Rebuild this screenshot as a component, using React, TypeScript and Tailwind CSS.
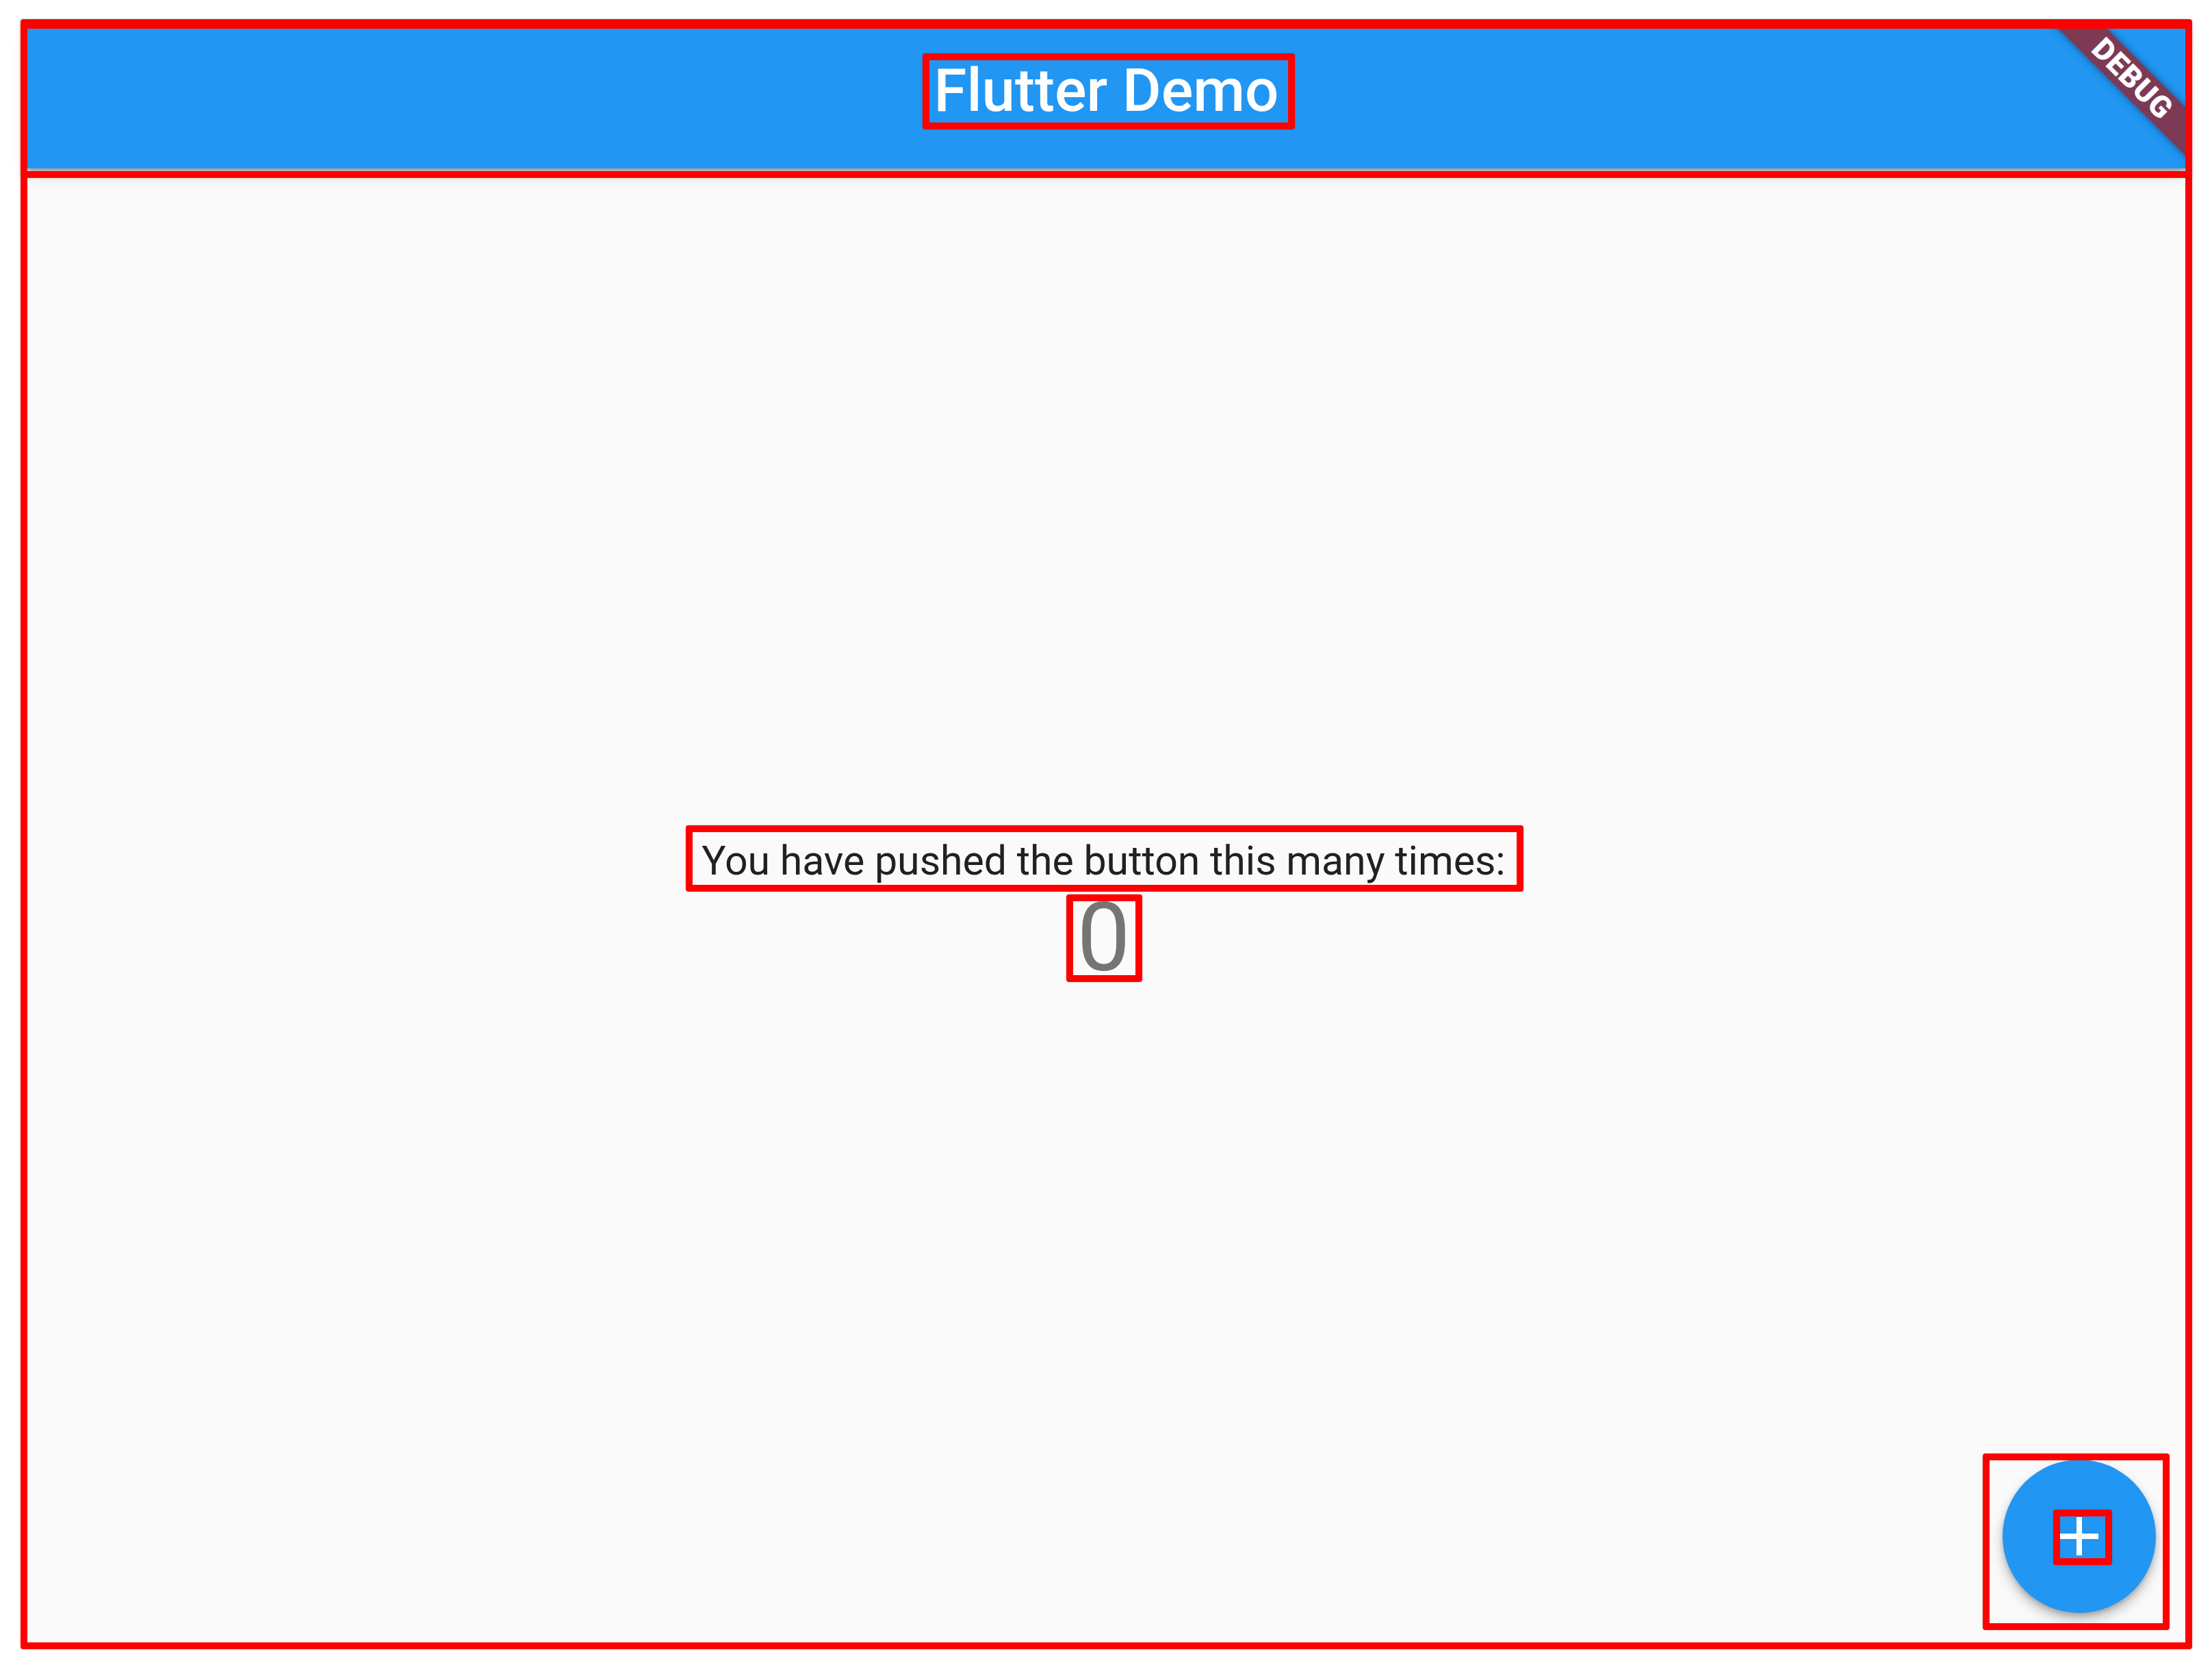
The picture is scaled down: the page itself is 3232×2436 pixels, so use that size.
import React from "react";

// red annotation rectangles drawn over the screenshot
const marks = [
  { left: 30, top: 28, width: 3173, height: 2382 },
  { left: 30, top: 32, width: 3173, height: 228 },
  { left: 1348, top: 78, width: 544, height: 111 },
  { left: 1002, top: 1206, width: 1224, height: 97 },
  { left: 1558, top: 1307, width: 111, height: 128 },
  { left: 2897, top: 2124, width: 273, height: 258 },
  { left: 3000, top: 2206, width: 86, height: 81 },
];

function DebugBanner() {
  return (
    <div className="pointer-events-none absolute right-0 top-0 z-20 h-[300px] w-[300px] overflow-hidden">
      <div className="absolute left-[3px] top-[52px] flex h-[50px] w-[440px] rotate-45 items-center justify-center bg-[#7c3a55] shadow-[0_0_12px_rgba(0,0,0,0.45)]">
        <span className="text-[44px] font-black leading-none tracking-[1px] text-white">DEBUG</span>
      </div>
    </div>
  );
}

function AddIcon() {
  return (
    <svg viewBox="0 0 24 24" className="h-[96px] w-[96px]" fill="#ffffff">
      <path d="M19 13h-6v6h-2v-6H5v-2h6V5h2v6h6v2z" />
    </svg>
  );
}

export default function App() {
  const count = 0;

  return (
    <div className="relative h-[2436px] w-[3232px] overflow-hidden bg-white pl-[40px] pt-[38px] font-['Roboto',sans-serif]">
      <div className="relative flex h-[2362px] w-[3153px] flex-col bg-[#fafafa] shadow-[0_0_18px_rgba(0,0,0,0.12)]">
        <header className="relative z-10 flex h-[208px] shrink-0 justify-center bg-[#2196f3] pt-[43px] shadow-[0_4px_3px_rgba(0,0,0,0.28),0_10px_22px_rgba(0,0,0,0.14)]">
          <h1 className="text-[87px] font-medium leading-[102px] text-white">Flutter Demo</h1>
        </header>

        <main className="relative flex flex-1 flex-col items-center justify-center pr-[8px] pt-[29px]">
          <p className="text-[59px] leading-[69px] text-[#212121]">You have pushed the button this many times:</p>
          <p className="-mt-[3px] text-[139px] leading-[163px] text-[#757575]">{count}</p>

          <button className="absolute bottom-[43px] right-[43px] flex h-[224px] w-[224px] items-center justify-center rounded-full bg-[#2196f3] shadow-[0_10px_18px_rgba(0,0,0,0.24),0_4px_6px_rgba(0,0,0,0.16)]">
            <AddIcon />
          </button>
        </main>

        <DebugBanner />
      </div>

      {marks.map((m, i) => (
        <div
          key={i}
          className="pointer-events-none absolute z-30 rounded-[4px] border-[10px] border-[#ff0000] shadow-[0_0_3px_rgba(0,0,0,0.2)]"
          style={{ left: m.left, top: m.top, width: m.width, height: m.height }}
        />
      ))}
    </div>
  );
}
